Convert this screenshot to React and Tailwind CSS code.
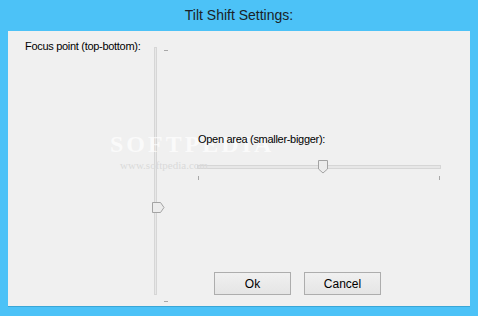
import React from 'react'

const font = { fontFamily: '"Liberation Sans", Arial, sans-serif' }

const VThumb = () => (
  <svg width="13" height="11" viewBox="0 0 13 11" className="absolute left-[-3px] top-[154px]">
    <path d="M0.5 0.5 H8.5 L12 5.5 L8.5 10.5 H0.5 Z" fill="#ececec" stroke="#a3a3a3" />
  </svg>
)

const HThumb = () => (
  <svg width="10" height="14" viewBox="0 0 10 14" className="absolute left-[120px] top-[-6px]">
    <path d="M0.5 0.5 H9.5 V9 L5 13 L0.5 9 Z" fill="#ececec" stroke="#a3a3a3" />
  </svg>
)

const DialogButton = ({ children }) => (
  <button className="w-[77px] h-[23px] border border-[#adadad] bg-gradient-to-b from-[#f0f0f0] to-[#e5e5e5] text-[12px] text-black leading-none">
    {children}
  </button>
)

export default function App() {
  return (
    <div className="w-[478px] h-[316px] bg-[#4cc2f7] flex flex-col" style={font}>
      <div className="h-[31px] flex items-center justify-center text-[14px] text-[#1a2228]">
        Tilt Shift Settings:
      </div>
      <div className="mx-[8px] h-[276px] bg-[#f0f0f0] border-b border-[#3aa6d6] flex relative overflow-hidden">
        <div className="w-[143px] pl-[17px] pt-[9px] text-[11px] tracking-[-0.3px] text-black leading-[13px] whitespace-nowrap">
          Focus point (top-bottom):
        </div>

        <div className="w-[17px] pt-[16px] flex">
          <div className="relative ml-[3px] w-[4px] h-[248px] bg-[#e7e7e7] border border-[#d6d6d6]">
            <VThumb />
          </div>
          <div className="flex flex-col justify-between ml-[7px] pt-[3px] pb-[4px]">
            <div className="w-[4px] h-px bg-[#a8a8a8]" />
            <div className="w-[4px] h-px bg-[#a8a8a8]" />
          </div>
        </div>

        <div className="flex-1 flex flex-col pl-[29px]">
          <div className="mt-[102px] text-[11px] tracking-[-0.3px] text-black leading-[13px] pl-[1px] whitespace-nowrap relative z-10">
            Open area (smaller-bigger):
          </div>
          <div className="relative mt-[19px] w-[244px] h-[4px] bg-[#e7e7e7] border border-[#d6d6d6]">
            <HThumb />
          </div>
          <div className="flex justify-between w-[244px] mt-[7px] px-[1px]">
            <div className="w-px h-[4px] bg-[#a8a8a8]" />
            <div className="w-px h-[4px] bg-[#a8a8a8]" />
          </div>
          <div className="mt-auto mb-[11px] ml-[17px] flex gap-[13px]">
            <DialogButton>Ok</DialogButton>
            <DialogButton>Cancel</DialogButton>
          </div>
        </div>

        <div className="absolute left-[102px] top-[95px] text-[24px] tracking-[3px] font-bold text-white/70 select-none pointer-events-none" style={{ fontFamily: '"Liberation Serif", serif' }}>
          SOFTPEDIA
        </div>
        <div className="absolute left-[112px] top-[126px] text-[11px] text-[#dadada] select-none pointer-events-none" style={{ fontFamily: '"Liberation Serif", serif' }}>
          www.softpedia.com
        </div>
      </div>
    </div>
  )
}
